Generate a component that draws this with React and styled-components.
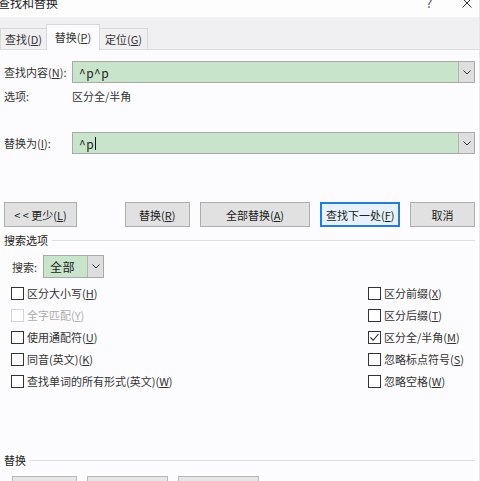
import React from 'react'
import styled, { createGlobalStyle, css } from 'styled-components'

const Global = createGlobalStyle`
  html, body { margin: 0; padding: 0; background: #fcfbfd; }
  body { font-family: "Noto Sans CJK SC", "Noto Sans", sans-serif; font-size: 11px; color: #333; }
`

const Dialog = styled.div`
  width: 480px;
  height: 481px;
  overflow: hidden;
  background: #fcfbfd;
  border-right: 1px solid #e6e6e6;
  box-sizing: border-box;
`

const TitleBar = styled.div`
  height: 17px;
  display: flex;
  align-items: flex-start;
  overflow: hidden;
  background: #fdfdfe;
`

const Title = styled.div`
  font-size: 12px;
  line-height: 14px;
  margin: -4px 0 0 -2px;
  color: #222;
  flex: 1;
`

const TitleButton = styled.div`
  font-size: 13px;
  line-height: 14px;
  margin-top: -4px;
  margin-right: ${p => p.gap}px;
  color: #444;
  width: ${p => p.w}px;
  text-align: center;
`

const TabStrip = styled.div`
  height: 32px;
  background: #f0eff1;
  border-bottom: 1px solid #dcdcdc;
  display: flex;
  align-items: flex-end;
`

const Tab = styled.div`
  box-sizing: border-box;
  height: ${p => (p.active ? 26 : 21)}px;
  margin-bottom: ${p => (p.active ? -1 : 0)}px;
  border: 1px solid #d9d9d9;
  border-bottom: none;
  margin-left: ${p => (p.first ? 0 : -1)}px;
  background: ${p => (p.active ? '#fcfbfd' : '#f0eff1')};
  display: flex;
  align-items: center;
  justify-content: center;
  padding-bottom: ${p => (p.active ? 2 : 0)}px;
  color: #333;
  width: ${p => p.w}px;
`

const Body = styled.div`
  display: flex;
  flex-direction: column;
  padding: 0 4px;
`

const FieldRow = styled.div`
  display: flex;
  align-items: center;
  margin-top: ${p => p.top}px;
  height: ${p => p.h || 22}px;
`

const Label = styled.div`
  width: 68px;
  white-space: nowrap;
`

const ComboBox = styled.div`
  display: flex;
  flex: ${p => (p.w ? 'none' : 1)};
  width: ${p => (p.w ? `${p.w}px` : 'auto')};
  height: 100%;
  box-sizing: border-box;
  border: 1px solid #a9a9a9;
  background: #c8e4cb;
`

const ComboText = styled.div`
  flex: 1;
  display: flex;
  align-items: center;
  padding-left: 6px;
  font-size: 12px;
  color: #222;
  letter-spacing: 0.5px;
`

const Caret = styled.span`
  display: inline-block;
  width: 1px;
  height: 13px;
  background: #111;
  margin-left: 1px;
`

const DropButton = styled.div`
  width: 15px;
  background: #dedede;
  border-left: 1px solid #b4b4b4;
  display: flex;
  align-items: center;
  justify-content: center;
`

const ButtonRow = styled.div`
  display: flex;
  gap: 10px;
  margin-top: 48px;
  height: 25px;
`

const Button = styled.div`
  box-sizing: border-box;
  width: ${p => p.w}px;
  height: 25px;
  background: #e1e1e1;
  border: 1px solid #adadad;
  display: flex;
  align-items: center;
  justify-content: center;
  color: #222;
  white-space: pre;
  ${p => p.primary && css`
    border: 2px solid #2a7bd0;
    background: #e5f1fb;
  `}
  ${p => p.spaced && css`
    margin-right: 38px;
  `}
`

const GroupHeader = styled.div`
  display: flex;
  align-items: center;
  gap: 4px;
  margin-top: ${p => p.top}px;
  height: 14px;
  color: #222;
  &::after {
    content: "";
    flex: 1;
    height: 1px;
    background: #dedede;
  }
`

const SearchRow = styled.div`
  display: flex;
  align-items: center;
  margin-top: 8px;
  height: 23px;
  padding-left: 8px;
`

const SearchLabel = styled.div`
  width: 31px;
`

const Options = styled.div`
  display: grid;
  grid-template-columns: 357px 1fr;
  margin-top: 4px;
  padding-left: 7px;
`

const Column = styled.div`
  display: flex;
  flex-direction: column;
`

const CheckRow = styled.div`
  display: flex;
  align-items: center;
  height: 22px;
  gap: 3px;
  color: ${p => (p.disabled ? '#adadad' : '#333')};
`

const Box = styled.div`
  box-sizing: border-box;
  width: 13px;
  height: 13px;
  border: 1px solid ${p => (p.disabled ? '#d4d4d4' : '#333')};
  background: #fff;
  display: flex;
  align-items: center;
  justify-content: center;
`

const BottomButtons = styled.div`
  display: flex;
  gap: 10px;
  margin-top: 9px;
  padding-left: 8px;
`

const GhostButton = styled.div`
  box-sizing: border-box;
  width: ${p => p.w}px;
  height: 24px;
  background: #e6e6e6;
  border: 1px solid #b8b8b8;
`

const Chevron = () => (
  <svg width="8" height="5" viewBox="0 0 8 5">
    <path d="M0.5 0.5 L4 4 L7.5 0.5" fill="none" stroke="#333" strokeWidth="1" />
  </svg>
)

const Check = () => (
  <svg width="11" height="11" viewBox="0 0 11 11">
    <path d="M1.5 5.5 L4.2 8.3 L9.5 2" fill="none" stroke="#222" strokeWidth="1.1" />
  </svg>
)

const Option = ({ text, k, checked, disabled }) => (
  <CheckRow disabled={disabled}>
    <Box disabled={disabled}>{checked && <Check />}</Box>
    <span>{text}(<u>{k}</u>)</span>
  </CheckRow>
)

const left = [
  { text: '区分大小写', k: 'H' },
  { text: '全字匹配', k: 'Y', disabled: true },
  { text: '使用通配符', k: 'U' },
  { text: '同音(英文)', k: 'K' },
  { text: '查找单词的所有形式(英文)', k: 'W' },
]

const right = [
  { text: '区分前缀', k: 'X' },
  { text: '区分后缀', k: 'T' },
  { text: '区分全/半角', k: 'M', checked: true },
  { text: '忽略标点符号', k: 'S' },
  { text: '忽略空格', k: 'W' },
]

export default function App() {
  return (
    <Dialog>
      <Global />
      <TitleBar>
        <Title>查找和替换</Title>
        <TitleButton w={20} gap={19}>?</TitleButton>
        <TitleButton w={18} gap={3}>
          <svg width="10" height="10" viewBox="0 0 10 10" style={{ marginTop: 2 }}>
            <path d="M0.5 0.5 L9.5 9.5 M9.5 0.5 L0.5 9.5" stroke="#333" strokeWidth="1" />
          </svg>
        </TitleButton>
      </TitleBar>
      <TabStrip>
        <Tab first w={47}>查找(<u>D</u>)</Tab>
        <Tab active w={54}>替换(<u>P</u>)</Tab>
        <Tab w={49}>定位(<u>G</u>)</Tab>
      </TabStrip>
      <Body>
        <FieldRow top={11}>
          <Label>查找内容(<u>N</u>):</Label>
          <ComboBox>
            <ComboText>^p^p</ComboText>
            <DropButton><Chevron /></DropButton>
          </ComboBox>
        </FieldRow>
        <FieldRow top={6} h={14}>
          <Label>选项:</Label>
          <span>区分全/半角</span>
        </FieldRow>
        <FieldRow top={29}>
          <Label>替换为(<u>I</u>):</Label>
          <ComboBox>
            <ComboText>^p<Caret /></ComboText>
            <DropButton><Chevron /></DropButton>
          </ComboBox>
        </FieldRow>
        <ButtonRow>
          <Button w={73} spaced>{'< < 更少('}<u>L</u>)</Button>
          <Button w={65}>替换(<u>R</u>)</Button>
          <Button w={111}>全部替换(<u>A</u>)</Button>
          <Button w={80} primary>查找下一处(<u>F</u>)</Button>
          <Button w={65}>取消</Button>
        </ButtonRow>
        <GroupHeader top={6}>搜索选项</GroupHeader>
        <SearchRow>
          <SearchLabel>搜索:</SearchLabel>
          <ComboBox w={61}>
            <ComboText>全部</ComboText>
            <DropButton><Chevron /></DropButton>
          </ComboBox>
        </SearchRow>
        <Options>
          <Column>
            {left.map(o => <Option key={o.text} {...o} />)}
          </Column>
          <Column>
            {right.map(o => <Option key={o.text} {...o} />)}
          </Column>
        </Options>
        <GroupHeader top={61}>替换</GroupHeader>
        <BottomButtons>
          <GhostButton w={65} />
          <GhostButton w={81} />
          <GhostButton w={81} />
        </BottomButtons>
      </Body>
    </Dialog>
  )
}
